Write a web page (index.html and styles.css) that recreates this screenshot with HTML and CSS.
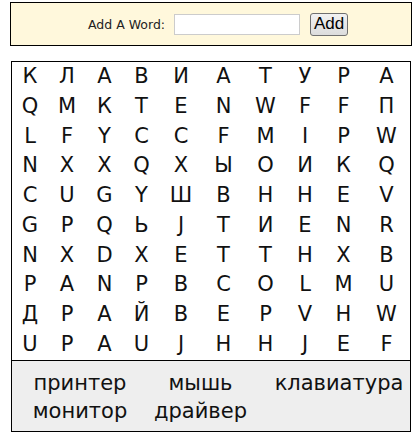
FILE: index.html
```html
<!DOCTYPE html>
<html>
<head>
<meta charset="utf-8">
<link rel="stylesheet" href="styles.css">
</head>
<body>
<div class="adder">
  <label class="adder-label">Add A Word:</label>
  <input class="adder-input" type="text">
  <button class="adder-btn">Add</button>
</div>
<div class="puzzle">
  <div class="grid">
    <span>К</span><span>Л</span><span>А</span><span>В</span><span>И</span><span>А</span><span>Т</span><span>У</span><span>Р</span><span>А</span>
    <span>Q</span><span>М</span><span>К</span><span>Т</span><span>Е</span><span>N</span><span>W</span><span>F</span><span>F</span><span>П</span>
    <span>L</span><span>F</span><span>Y</span><span>C</span><span>C</span><span>F</span><span>M</span><span>I</span><span>P</span><span>W</span>
    <span>N</span><span>X</span><span>X</span><span>Q</span><span>Х</span><span>Ы</span><span>О</span><span>И</span><span>К</span><span>Q</span>
    <span>C</span><span>U</span><span>G</span><span>Y</span><span>Ш</span><span>В</span><span>Н</span><span>Н</span><span>Е</span><span>V</span>
    <span>G</span><span>Р</span><span>Q</span><span>Ь</span><span>J</span><span>Т</span><span>И</span><span>Е</span><span>N</span><span>R</span>
    <span>N</span><span>X</span><span>D</span><span>X</span><span>Е</span><span>Т</span><span>Т</span><span>Н</span><span>Х</span><span>В</span>
    <span>Р</span><span>А</span><span>N</span><span>Р</span><span>В</span><span>С</span><span>О</span><span>L</span><span>М</span><span>U</span>
    <span>Д</span><span>Р</span><span>А</span><span>Й</span><span>В</span><span>Е</span><span>Р</span><span>V</span><span>Н</span><span>W</span>
    <span>U</span><span>Р</span><span>А</span><span>U</span><span>J</span><span>Н</span><span>Н</span><span>J</span><span>Е</span><span>F</span>
  </div>
  <div class="words">
    <span>принтер</span><span>мышь</span><span>клавиатура</span>
    <span>монитор</span><span>драйвер</span>
  </div>
</div>
</body>
</html>
```
FILE: styles.css
```css
html, body {
  margin: 0;
  padding: 0;
  background: #ffffff;
}
body {
  padding: 2px 7px 0 10px;
  font-family: "DejaVu Sans", Verdana, sans-serif;
  color: #111;
}
.adder {
  width: 400px;
  height: 42px;
  border: 1px solid #000;
  background: #fff8dc;
  display: flex;
  align-items: center;
  box-sizing: content-box;
}
.adder-label {
  font-size: 12.5px;
  margin-left: 77px;
  margin-right: 9px;
  color: #222;
}
.adder-input {
  width: 126px;
  height: 21px;
  box-sizing: border-box;
  border: 1px solid #ccc;
  background: #fff;
  padding: 0 3px;
  margin: 1px 10px 0 0;
}
.adder-btn {
  height: 23px;
  width: 38px;
  padding: 0;
  font-family: "Liberation Sans", Arial, sans-serif;
  font-size: 17px;
  color: #000;
  border: 1px solid #707070;
  border-radius: 3px;
  background: linear-gradient(#f2f2f2, #dcdcdc);
}
.puzzle {
  margin: 15px 0 0 1px;
  width: 398px;
  border: 1px solid #000;
}
.grid {
  display: grid;
  grid-template-columns: 36px 38px 37px 37px 42px 43px 41px 38px 39px 47px;
  grid-auto-rows: 29.75px;
  font-size: 21px;
  line-height: 29.75px;
  text-align: center;
  background: #fff;
  border-bottom: 1px solid #000;
}
.words {
  background: #eeeeee;
  display: grid;
  grid-template-columns: 96px 99px 132px;
  column-gap: 23px;
  justify-items: center;
  padding: 8px 0 8px 20px;
  font-size: 21px;
  line-height: 28px;
  height: 54px;
}
```
